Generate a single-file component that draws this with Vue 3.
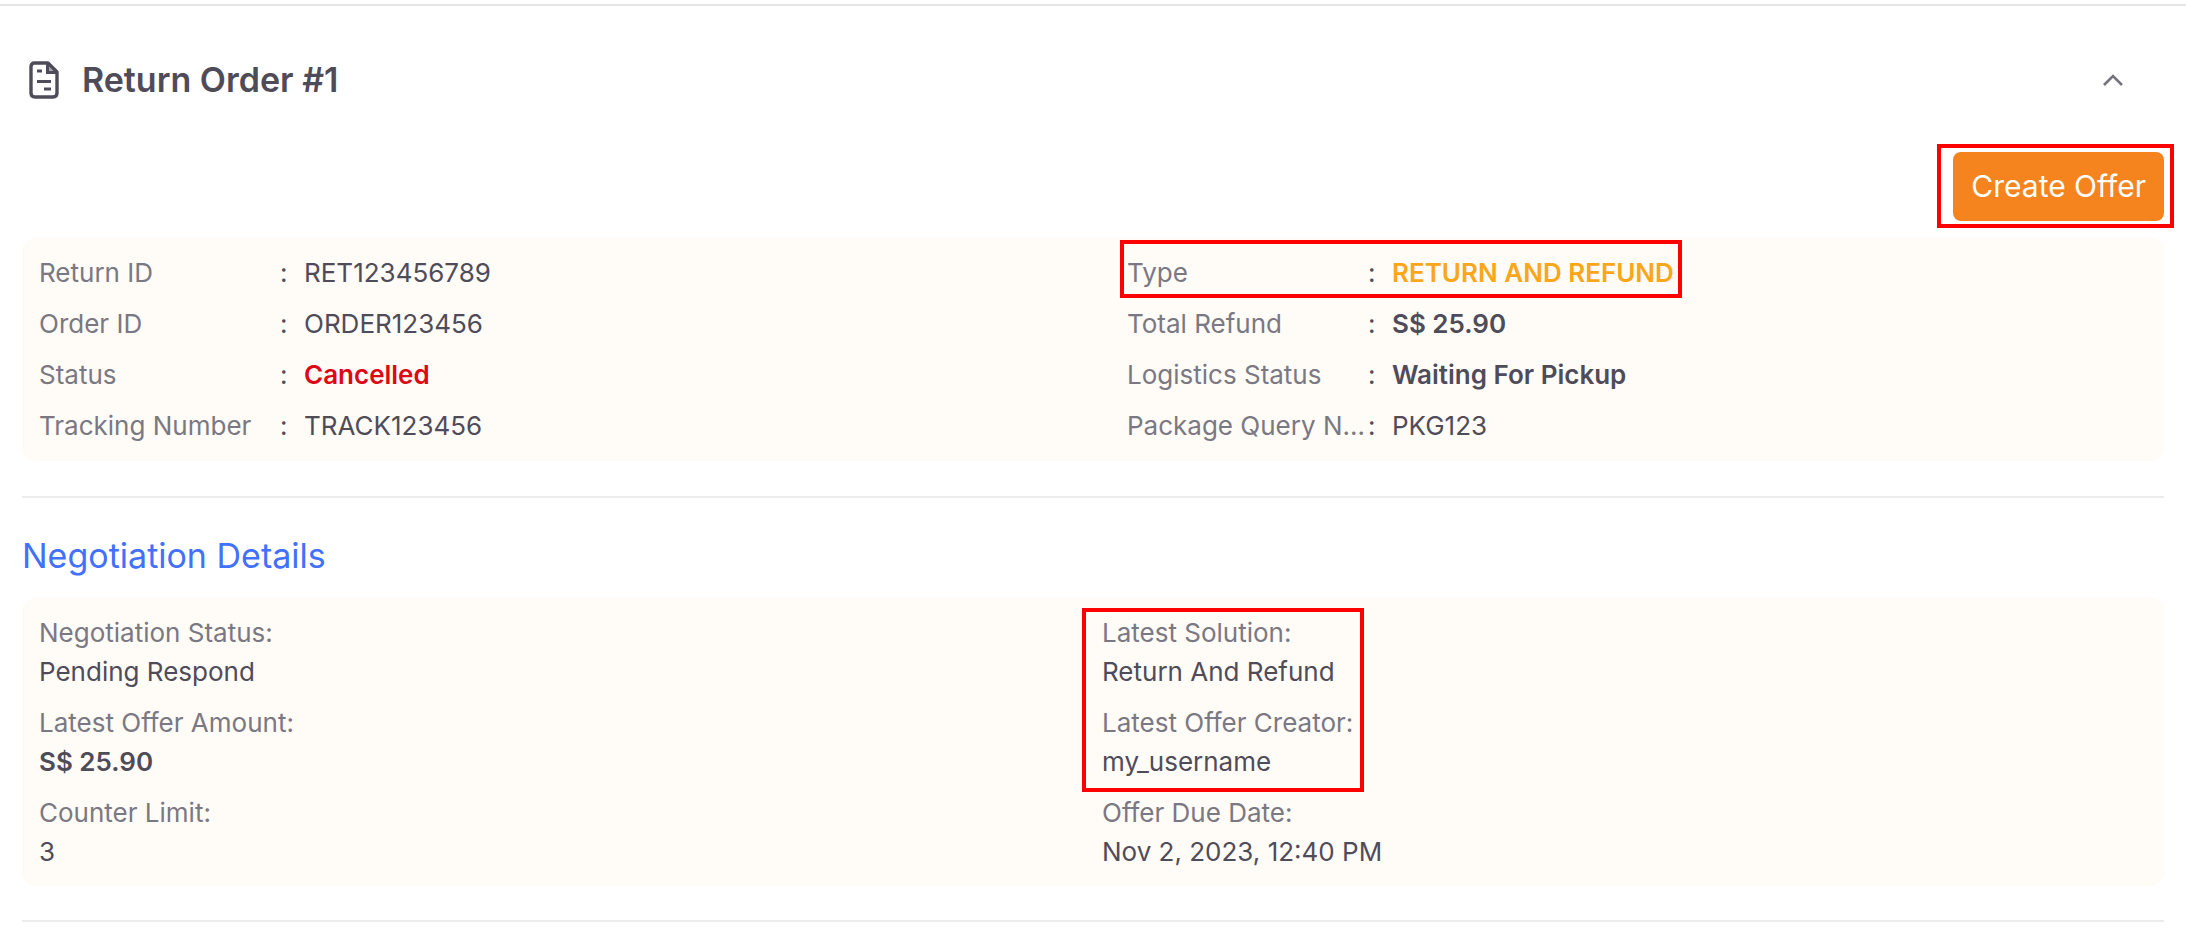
<script setup>
import { ref } from 'vue'

const open = ref(true)

const leftFields = [
  { label: 'Return ID', value: 'RET123456789' },
  { label: 'Order ID', value: 'ORDER123456' },
  { label: 'Status', value: 'Cancelled', tone: 'danger' },
  { label: 'Tracking Number', value: 'TRACK123456' },
]
const rightFields = [
  { label: 'Type', value: 'RETURN AND REFUND', tone: 'warning', marked: true },
  { label: 'Total Refund', value: 'S$ 25.90', tone: 'strong' },
  { label: 'Logistics Status', value: 'Waiting For Pickup', tone: 'strong' },
  { label: 'Package Query Number', value: 'PKG123' },
]
const negotiationLeft = [
  { label: 'Negotiation Status:', value: 'Pending Respond' },
  { label: 'Latest Offer Amount:', value: 'S$ 25.90', tone: 'strong' },
  { label: 'Counter Limit:', value: '3' },
]
const negotiationMarked = [
  { label: 'Latest Solution:', value: 'Return And Refund' },
  { label: 'Latest Offer Creator:', value: 'my_username' },
]
const negotiationRest = [{ label: 'Offer Due Date:', value: 'Nov 2, 2023, 12:40 PM' }]
</script>

<template>
  <main class="page">
    <section class="order">
      <header class="head">
        <svg class="doc" viewBox="0 0 30 38" fill="none" stroke="currentColor" aria-hidden="true">
          <path d="M5.5 2H19L28 11V32Q28 36 24 36H6Q2 36 2 32V5.5Q2 2 5.5 2Z" stroke-width="3.4" stroke-linejoin="round" />
          <path d="M18.5 2V11.5H28" stroke-width="3" />
          <path d="M18 3L27 11H18Z" fill="currentColor" fill-opacity="0.5" stroke="none" />
          <path d="M8 10H13M8 20.5H22M15 28H22" stroke-width="3.2" />
        </svg>
        <h1 class="title">Return Order #1</h1>
        <button class="toggle" type="button" aria-label="Toggle details" :aria-expanded="open" @click="open = !open">
          <svg class="chevron" viewBox="0 0 22 14" fill="none" stroke="currentColor" aria-hidden="true">
            <path d="M2 12L11 3L20 12" stroke-width="2.6" />
          </svg>
        </button>
      </header>

      <template v-if="open">
        <div class="actions">
          <div class="marked mark-button">
            <button class="create" type="button">Create Offer</button>
          </div>
        </div>

        <div class="panel summary">
          <dl v-for="(col, i) in [leftFields, rightFields]" :key="i" class="col">
            <div v-for="f in col" :key="f.label" class="row" :class="{ 'marked mark-row': f.marked }">
              <dt class="label fixed">{{ f.label }}</dt>
              <dd class="value inline" :class="f.tone">{{ f.value }}</dd>
            </div>
          </dl>
        </div>

        <hr class="divider" />

        <h2 class="subtitle">Negotiation Details</h2>
        <div class="panel negotiation">
          <dl class="col">
            <div v-for="f in negotiationLeft" :key="f.label">
              <dt class="label">{{ f.label }}</dt>
              <dd class="value" :class="f.tone">{{ f.value }}</dd>
            </div>
          </dl>
          <div class="col">
            <dl class="col marked mark-group">
              <div v-for="f in negotiationMarked" :key="f.label">
                <dt class="label">{{ f.label }}</dt>
                <dd class="value">{{ f.value }}</dd>
              </div>
            </dl>
            <dl class="col">
              <div v-for="f in negotiationRest" :key="f.label">
                <dt class="label">{{ f.label }}</dt>
                <dd class="value">{{ f.value }}</dd>
              </div>
            </dl>
          </div>
        </div>

        <hr class="divider last" />
      </template>
    </section>
  </main>
</template>

<style>
body {
  margin: 0;
  background: #fff;
}
</style>

<style scoped>
.page {
  padding-top: 4px;
  font-family: Inter, "Liberation Sans", sans-serif;
  font-size: 26px;
  line-height: 39px;
  color: #4f4c5a;
}
.order {
  border-top: 2px solid #e6e6e6;
  padding: 0 22px;
}
.head {
  display: flex;
  align-items: center;
  padding: 54px 40px 52px 7px;
}
.doc {
  width: 30px;
  height: 38px;
}
.title {
  margin: 0 auto 0 23px;
  font-size: 34px;
  line-height: 40px;
  font-weight: 600;
}
.toggle {
  display: flex;
  padding: 0;
  border: 0;
  background: none;
  color: #75737e;
  cursor: pointer;
}
.chevron {
  width: 22px;
  height: 14px;
}
.actions {
  display: flex;
  justify-content: flex-end;
}
.create {
  display: block;
  padding: 14px 18px;
  border: 0;
  border-radius: 8px;
  background: #f5841f;
  color: #fff;
  font-family: inherit;
  font-size: 30px;
  line-height: 41px;
  cursor: pointer;
}
.panel {
  display: grid;
  grid-template-columns: 1fr 1fr;
  border-radius: 14px;
  background: #fffbf6;
}
.summary {
  column-gap: 68px;
  margin-top: 17px;
  padding: 15px 17px 16px;
}
.negotiation {
  column-gap: 18px;
  padding: 15px 17px;
}
.col {
  display: flex;
  flex-direction: column;
  gap: 12px;
  margin: 0;
}
.row {
  display: flex;
  width: fit-content;
}
.label {
  color: #7a7883;
}
.fixed {
  width: 238px;
  overflow: hidden;
  text-overflow: ellipsis;
  white-space: nowrap;
}
.value {
  margin: 0;
}
.inline {
  display: flex;
}
.inline::before {
  content: ":";
  box-sizing: border-box;
  width: 27px;
  padding-left: 3px;
  font-weight: 400;
  color: #4f4c5a;
}
.strong,
.danger,
.warning {
  font-weight: 600;
}
.danger {
  color: #de0714;
}
.warning {
  color: #faa61a;
}
.divider {
  height: 2px;
  margin: 35px 0 36px;
  border: 0;
  background: #ececec;
}
.last {
  margin: 34px 0 0;
}
.subtitle {
  margin: 0 0 20px;
  font-size: 34px;
  line-height: 44px;
  font-weight: 400;
  color: #4270ff;
}

/* Red callout frames around the highlighted areas */
.marked {
  position: relative;
  width: fit-content;
}
.marked::after {
  content: "";
  position: absolute;
  border: 4px solid #f00;
  pointer-events: none;
}
.mark-button::after {
  inset: -8px -10px -7px -16px;
}
.mark-row::after {
  inset: -13px -8px -6px -7px;
}
.mark-group::after {
  inset: -5px -11px -11px -20px;
}
</style>
